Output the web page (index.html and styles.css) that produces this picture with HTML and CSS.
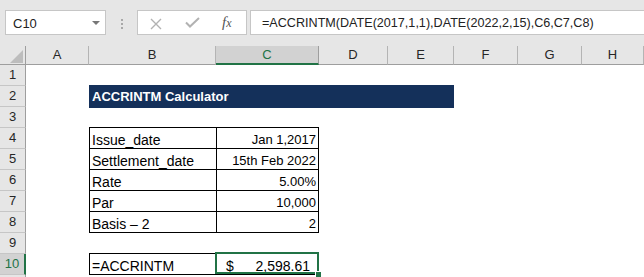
FILE: index.html
```html
<!DOCTYPE html>
<html>
<head>
<meta charset="utf-8">
<link rel="stylesheet" href="styles.css">
</head>
<body>
<div class="app">
  <div class="bar">
    <div class="namebox"><span>C10</span><svg class="dd" width="8" height="4" viewBox="0 0 8 4"><polygon points="0,0 8,0 4,4" fill="#777"/></svg></div>
    <div class="grip"><i></i><i></i><i></i></div>
    <div class="fxbox">
      <svg class="ix" width="12" height="12" viewBox="0 0 12 12"><path d="M1 1 L11 11 M11 1 L1 11" stroke="#b2b2b2" stroke-width="1.4" fill="none"/></svg>
      <svg class="ic" width="15" height="11" viewBox="0 0 15 11"><path d="M1 5.5 L5 9.5 L14 1" stroke="#b2b2b2" stroke-width="2" fill="none"/></svg>
      <span class="fx">f<span class="fxx">x</span></span>
    </div>
    <div class="formula">=ACCRINTM(DATE(2017,1,1),DATE(2022,2,15),C6,C7,C8)</div>
  </div>
  <div class="sheet">
    <div class="row hdr">
      <div class="corner"><svg width="25" height="18" viewBox="0 0 25 18"><polygon points="10,17 23,17 23,4" fill="#bdbdbd"/></svg></div>
      <div class="ch">A</div><div class="ch">B</div><div class="ch sel">C</div><div class="ch">D</div><div class="ch">E</div><div class="ch">F</div><div class="ch">G</div><div class="ch">H</div>
    </div>
    <div class="row"><div class="rh">1</div></div>
    <div class="row"><div class="rh">2</div><div></div><div class="title">ACCRINTM Calculator</div></div>
    <div class="row"><div class="rh">3</div></div>
    <div class="row"><div class="rh">4</div><div></div><div class="lbl top">Issue_date</div><div class="val top">Jan 1,2017</div></div>
    <div class="row"><div class="rh">5</div><div></div><div class="lbl">Settlement_date</div><div class="val">15th Feb 2022</div></div>
    <div class="row"><div class="rh">6</div><div></div><div class="lbl">Rate</div><div class="val">5.00%</div></div>
    <div class="row"><div class="rh">7</div><div></div><div class="lbl">Par</div><div class="val">10,000</div></div>
    <div class="row"><div class="rh">8</div><div></div><div class="lbl">Basis – 2</div><div class="val">2</div></div>
    <div class="row"><div class="rh">9</div></div>
    <div class="row"><div class="rh sel">10</div><div></div><div class="lbl top">=ACCRINTM</div><div class="result"><span>$</span><span>2,598.61</span></div></div>
    <div class="row"><div class="rh"></div></div>
  </div>
</div>
</body>
</html>
```
FILE: styles.css
```css
html, body {
  margin: 0;
  padding: 0;
  background: #fff;
  overflow: hidden;
}
body {
  font-family: "Liberation Sans", Arial, sans-serif;
  color: #000;
}
.app {
  width: 644px;
  height: 277px;
  overflow: hidden;
}
.bar {
  height: 46px;
  background: #e6e6e6;
  display: flex;
  align-items: flex-start;
  padding-top: 10px;
  box-sizing: border-box;
}
.namebox {
  margin-left: 5px;
  width: 101px;
  height: 25px;
  box-sizing: border-box;
  border: 1px solid #c6c6c6;
  background: #fff;
  display: flex;
  align-items: center;
  justify-content: space-between;
  padding: 1px 5px 0 7px;
  font-size: 13px;
  color: #222;
}
.dd { margin-top: -1px; }
.grip {
  width: 31px;
  height: 25px;
  display: flex;
  flex-direction: column;
  align-items: center;
  justify-content: center;
  gap: 2px;
  padding-top: 3px;
  box-sizing: border-box;
}
.grip i {
  display: block;
  width: 2px;
  height: 2px;
  background: #a8a8a8;
}
.fxbox {
  width: 110px;
  height: 25px;
  box-sizing: border-box;
  border: 1px solid #c6c6c6;
  background: #fff;
  display: flex;
  align-items: center;
  padding: 2px 0 0 12px;
}
.ix { margin-right: 23px; }
.ic { margin-right: 22px; margin-top: -2px; }
.fx {
  font-family: "Liberation Serif", "Times New Roman", serif;
  font-style: italic;
  font-size: 15px;
  color: #555;
  margin-top: -3px;
}
.fxx { font-size: 12px; }
.formula {
  flex: 1;
  margin-left: 3px;
  margin-right: -2px;
  height: 25px;
  box-sizing: border-box;
  border: 1px solid #c6c6c6;
  background: #fff;
  padding: 1px 0 0 11px;
  font-size: 12.6px;
  line-height: 23px;
  color: #222;
  white-space: nowrap;
}
.row {
  display: grid;
  grid-template-columns: 26px 63px 127px 103px 69px 66px 64px 64px 62px;
  height: 21px;
}
.row.hdr { height: 19px; }
.corner {
  background: #e6e6e6;
  border-right: 1px solid #9e9e9e;
  border-bottom: 1px solid #9e9e9e;
}
.corner svg { display: block; }
.ch {
  background: #e6e6e6;
  border-right: 1px solid #b4b4b4;
  border-bottom: 1px solid #9e9e9e;
  text-align: center;
  font-size: 13px;
  line-height: 18px;
  color: #262626;
}
.ch.sel {
  background: #d2d2d2;
  color: #217346;
  border-right-color: #9e9e9e;
  border-bottom: 2px solid #217346;
  line-height: 17px;
}
.rh {
  background: #e6e6e6;
  border-right: 1px solid #9e9e9e;
  border-bottom: 1px solid #c6c6c6;
  text-align: center;
  font-size: 13px;
  line-height: 20px;
  color: #262626;
}
.rh.sel {
  background: #d2d2d2;
  color: #217346;
  border-right: 2px solid #217346;
}
.title {
  grid-column: span 4;
  background: #14305a;
  box-shadow: 0 -1px 0 #14305a, 0 1px 0 #14305a;
  color: #fff;
  font-weight: bold;
  font-size: 13px;
  line-height: 20px;
  padding: 1px 0 0 3px;
  white-space: nowrap;
}
.lbl, .val, .result {
  display: flex;
  align-items: flex-end;
  line-height: 16px;
  white-space: nowrap;
}
.lbl {
  border-left: 1px solid #000;
  border-bottom: 1px solid #000;
  padding-left: 2px;
  font-size: 14px;
}
.val {
  border-left: 1px solid #000;
  border-right: 1px solid #000;
  border-bottom: 1px solid #000;
  justify-content: flex-end;
  padding-right: 2px;
  font-size: 13px;
}
.top { box-shadow: 0 -1px 0 #000; }
.result {
  position: relative;
  justify-content: space-between;
  padding: 0 9px 0 10px;
  font-size: 14px;
  border-bottom: 1px solid #000;
}
.result::after {
  content: "";
  position: absolute;
  left: -1px;
  right: 0;
  top: -2px;
  bottom: 0;
  border: 2px solid #217346;
}
.result::before {
  content: "";
  position: absolute;
  right: -3px;
  bottom: -4px;
  width: 5px;
  height: 5px;
  background: #217346;
  border: 1px solid #fff;
  z-index: 1;
}
```
